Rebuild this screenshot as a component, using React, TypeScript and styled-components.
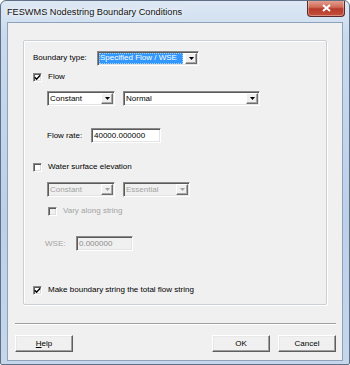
import React from "react";
import styled, { createGlobalStyle, css } from "styled-components";

const Global = createGlobalStyle`
  html, body { margin: 0; padding: 0; background: #ffffff; }
  body { width: 350px; height: 365px; overflow: hidden; }
  * { box-sizing: border-box; }
`;

const Window = styled.div`
  width: 350px;
  height: 365px;
  display: flex;
  flex-direction: column;
  border: 1px solid #5f6f86;
  border-radius: 6px 6px 2px 2px;
  background: linear-gradient(180deg, #dde8f4 0%, #c9daee 10%, #bcd0e8 60%, #c6d7ec 100%);
  font-family: "Liberation Sans", Arial, sans-serif;
  color: #000;
  overflow: hidden;
`;

const TitleBar = styled.div`
  height: 21px;
  display: flex;
  align-items: flex-start;
  justify-content: space-between;
  padding-left: 6px;
  flex-shrink: 0;
`;

const Title = styled.div`
  font-family: "Liberation Sans", Arial, sans-serif;
  font-size: 9.2px;
  line-height: 10px;
  margin-top: 6px;
  color: #111;
  text-shadow: 0 0 4px #ffffff, 0 0 6px #ffffff;
`;

const CloseButton = styled.div`
  width: 38px;
  height: 17px;
  margin-right: 4px;
  margin-top: -1px;
  border: 1px solid #5b2a28;
  border-top: none;
  border-radius: 0 0 4px 4px;
  background: linear-gradient(180deg, #e5a796 0%, #d06a58 45%, #b63b2c 55%, #c5503a 100%);
  display: flex;
  align-items: center;
  justify-content: center;
  box-shadow: inset 0 0 0 1px rgba(255, 255, 255, 0.35);
`;

const Client = styled.div`
  flex: 1;
  margin: 0 6px 4px 6px;
  border: 1px solid #8ea2bb;
  background: #f0f0f0;
  display: flex;
  flex-direction: column;
  padding: 17px 0 8px 0;
`;

const GroupBox = styled.div`
  margin: 0 15px;
  border: 1px solid #c9cfd5;
  border-radius: 2px;
  box-shadow: inset 1px 1px 0 #ffffff, 1px 1px 0 #ffffff;
  padding: 10px 0 8px 9px;
  display: flex;
  flex-direction: column;
`;

const Row = styled.div<{ $mt?: number; $h?: number; $indent?: number }>`
  display: flex;
  align-items: center;
  margin-top: ${(p) => p.$mt ?? 0}px;
  height: ${(p) => p.$h ?? 15}px;
  padding-left: ${(p) => p.$indent ?? 0}px;
`;

const Label = styled.span<{ $w?: number; $disabled?: boolean }>`
  font-size: 8px;
  line-height: 10px;
  white-space: nowrap;
  color: ${(p) => (p.$disabled ? "#a3a3a3" : "#000")};
  ${(p) => (p.$w ? `width: ${p.$w}px; flex-shrink: 0;` : "")}
`;

const Combo = styled.div<{ $w: number; $ml?: number; $disabled?: boolean }>`
  width: ${(p) => p.$w}px;
  height: 15px;
  margin-left: ${(p) => p.$ml ?? 0}px;
  display: flex;
  align-items: stretch;
  border: 1px solid;
  border-color: #8a8a8a #ffffff #ffffff #8a8a8a;
  box-shadow: inset 1px 1px 0 #5a5a5a, inset -1px -1px 0 #e4e4e4;
  padding: 1px 1px 1px 1px;
  background: ${(p) => (p.$disabled ? "#f0f0f0" : "#ffffff")};
  flex-shrink: 0;
`;

const ComboText = styled.div<{ $selected?: boolean; $disabled?: boolean }>`
  flex: 1;
  display: flex;
  align-items: center;
  font-size: 8px;
  line-height: 10px;
  padding-left: 1px;
  white-space: nowrap;
  overflow: hidden;
  color: ${(p) => (p.$selected ? "#ffffff" : p.$disabled ? "#a3a3a3" : "#000")};
  ${(p) =>
    p.$selected &&
    css`
      background: #3398fe;
      margin: 0 2px 0 0;
      outline: 1px dotted #a8cff7;
      outline-offset: -1px;
    `}
`;

const ComboArrow = styled.div<{ $disabled?: boolean }>`
  width: 12px;
  flex-shrink: 0;
  background: #f0f0f0;
  border: 1px solid;
  border-color: #ffffff #6e6e6e #6e6e6e #ffffff;
  box-shadow: inset -1px -1px 0 #a8a8a8;
  display: flex;
  align-items: center;
  justify-content: center;
  color: ${(p) => (p.$disabled ? "#a3a3a3" : "#000")};
`;

const Edit = styled.div<{ $w: number; $disabled?: boolean }>`
  width: ${(p) => p.$w}px;
  height: 15px;
  border: 1px solid;
  border-color: #8a8a8a #ffffff #ffffff #8a8a8a;
  box-shadow: inset 1px 1px 0 #5a5a5a, inset -1px -1px 0 #e4e4e4;
  background: ${(p) => (p.$disabled ? "#f0f0f0" : "#ffffff")};
  color: ${(p) => (p.$disabled ? "#8c8c8c" : "#000")};
  font-size: 8px;
  line-height: 10px;
  display: flex;
  align-items: center;
  padding-left: 2px;
  flex-shrink: 0;
`;

const CheckBox = styled.div<{ $disabled?: boolean }>`
  width: 9px;
  height: 9px;
  flex-shrink: 0;
  border: 1px solid;
  border-color: #8a8a8a #ffffff #ffffff #8a8a8a;
  box-shadow: inset 1px 1px 0 #5a5a5a, inset -1px -1px 0 #dcdcdc;
  background: ${(p) => (p.$disabled ? "#f0f0f0" : "#ffffff")};
  display: flex;
  align-items: center;
  justify-content: center;
  margin-right: 6px;
`;

const Separator = styled.div`
  margin: 18px 6px 0 7px;
  height: 2px;
  border-top: 1px solid #a0a0a0;
  border-bottom: 1px solid #ffffff;
`;

const ButtonRow = styled.div`
  margin: 10px 6px 0 7px;
  display: flex;
  gap: 8px;
`;

const Spacer = styled.div`
  flex: 1;
`;

const Button = styled.div`
  width: 58px;
  height: 17px;
  border: 1px solid;
  border-color: #ffffff #5e5e5e #5e5e5e #ffffff;
  box-shadow: inset -1px -1px 0 #a0a0a0, inset 1px 1px 0 #e8e8e8;
  background: #f0f0f0;
  display: flex;
  align-items: center;
  justify-content: center;
  font-size: 8px;
  line-height: 10px;
  color: #000;
`;

const Accel = styled.span`
  text-decoration: underline;
`;

const Arrow: React.FC = () => (
  <svg width="5" height="3" viewBox="0 0 5 3">
    <path d="M0 0H5L2.5 3Z" fill="currentColor" />
  </svg>
);

const Check: React.FC = () => (
  <svg width="7" height="7" viewBox="0 0 7 7">
    <path d="M0.8 3.2L2.6 5.2L6.2 1.2" stroke="#000" strokeWidth="1.4" fill="none" />
  </svg>
);

type ComboProps = { w: number; ml?: number; text: string; selected?: boolean; disabled?: boolean };
const ComboBox: React.FC<ComboProps> = ({ w, ml, text, selected, disabled }) => (
  <Combo $w={w} $ml={ml} $disabled={disabled}>
    <ComboText $selected={selected} $disabled={disabled}>
      {text}
    </ComboText>
    <ComboArrow $disabled={disabled}>
      <Arrow />
    </ComboArrow>
  </Combo>
);

export default function App() {
  return (
    <>
      <Global />
      <Window>
        <TitleBar>
          <Title>FESWMS Nodestring Boundary Conditions</Title>
          <CloseButton>
            <svg width="9" height="8" viewBox="0 0 9 8">
              <path d="M1 1L8 7M8 1L1 7" stroke="#ffffff" strokeWidth="2" />
            </svg>
          </CloseButton>
        </TitleBar>
        <Client>
          <GroupBox>
            <Row $h={14}>
              <Label $w={64}>Boundary type:</Label>
              <ComboBox w={102} text="Specified Flow / WSE" selected />
            </Row>
            <Row $mt={6} $h={12}>
              <CheckBox>
                <Check />
              </CheckBox>
              <Label>Flow</Label>
            </Row>
            <Row $mt={8} $indent={14}>
              <ComboBox w={68} text="Constant" />
              <ComboBox w={137} ml={8} text="Normal" />
            </Row>
            <Row $mt={22} $indent={14}>
              <Label $w={44}>Flow rate:</Label>
              <Edit $w={70}>40000.000000</Edit>
            </Row>
            <Row $mt={18} $h={12}>
              <CheckBox />
              <Label>Water surface elevation</Label>
            </Row>
            <Row $mt={9} $indent={14}>
              <ComboBox w={68} text="Constant" disabled />
              <ComboBox w={67} ml={8} text="Essential" disabled />
            </Row>
            <Row $mt={8} $h={12} $indent={15}>
              <CheckBox $disabled />
              <Label $disabled>Vary along string</Label>
            </Row>
            <Row $mt={19} $indent={12}>
              <Label $w={31} $disabled>
                WSE:
              </Label>
              <Edit $w={57} $disabled>
                0.000000
              </Edit>
            </Row>
            <Row $mt={33} $h={12}>
              <CheckBox>
                <Check />
              </CheckBox>
              <Label>Make boundary string the total flow string</Label>
            </Row>
          </GroupBox>
          <Separator />
          <ButtonRow>
            <Button>
              <span>
                <Accel>H</Accel>elp
              </span>
            </Button>
            <Spacer />
            <Button>OK</Button>
            <Button>Cancel</Button>
          </ButtonRow>
        </Client>
      </Window>
    </>
  );
}
